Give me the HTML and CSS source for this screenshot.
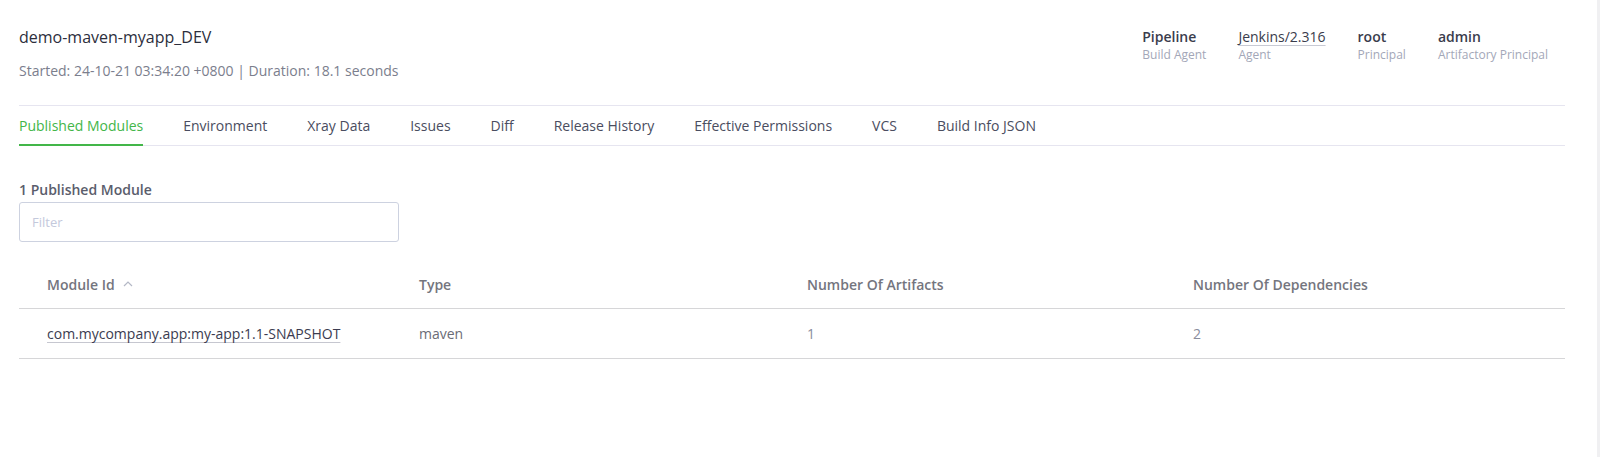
FILE: index.html
```html
<!DOCTYPE html>
<html lang="en">
<head>
<meta charset="utf-8">
<title>demo-maven-myapp_DEV</title>
<link rel="stylesheet" href="styles.css">
</head>
<body>
<div class="page">
  <main class="main">
    <header class="build-header">
      <div class="build-title">
        <h1 class="title">demo-maven-myapp_DEV</h1>
        <div class="subtitle">Started: 24-10-21 03:34:20 +0800 | Duration: 18.1 seconds</div>
      </div>
      <div class="meta">
        <div class="meta-item">
          <div class="meta-value">Pipeline</div>
          <div class="meta-label">Build Agent</div>
        </div>
        <div class="meta-item">
          <div class="meta-value link">Jenkins/2.316</div>
          <div class="meta-label">Agent</div>
        </div>
        <div class="meta-item">
          <div class="meta-value">root</div>
          <div class="meta-label">Principal</div>
        </div>
        <div class="meta-item">
          <div class="meta-value">admin</div>
          <div class="meta-label">Artifactory Principal</div>
        </div>
      </div>
    </header>

    <nav class="tabs">
      <div class="tab active">Published Modules</div>
      <div class="tab">Environment</div>
      <div class="tab">Xray Data</div>
      <div class="tab">Issues</div>
      <div class="tab">Diff</div>
      <div class="tab">Release History</div>
      <div class="tab">Effective Permissions</div>
      <div class="tab">VCS</div>
      <div class="tab">Build Info JSON</div>
    </nav>

    <section class="modules">
      <div class="count">1 Published Module</div>
      <input class="filter" type="text" placeholder="Filter">

      <div class="table">
        <div class="row head">
          <div class="cell">Module Id <svg class="caret" width="10" height="6" viewBox="0 0 10 6"><path d="M1 5 L5 1 L9 5" fill="none" stroke="#b4b8c6" stroke-width="1.2"/></svg></div>
          <div class="cell">Type</div>
          <div class="cell">Number Of Artifacts</div>
          <div class="cell">Number Of Dependencies</div>
        </div>
        <div class="row">
          <div class="cell"><span class="module-link">com.mycompany.app:my-app:1.1-SNAPSHOT</span></div>
          <div class="cell muted">maven</div>
          <div class="cell light">1</div>
          <div class="cell light">2</div>
        </div>
      </div>
    </section>
  </main>
  <div class="scroll-strip"></div>
</div>
</body>
</html>
```

FILE: styles.css
```css
* { box-sizing: border-box; }

html, body {
  margin: 0;
  padding: 0;
  background: #ffffff;
  font-family: "Open Sans", "Noto Sans", sans-serif;
  color: #3a3c4c;
}

.page {
  display: flex;
  min-height: 457px;
}

.main {
  flex: 1;
  padding: 0 32px 0 19px;
}

.scroll-strip {
  width: 3px;
  background: #f0f0f2;
}

.build-header {
  display: flex;
  justify-content: space-between;
  align-items: flex-start;
}

.title {
  margin: 26px 0 0;
  font-size: 16px;
  line-height: 22px;
  font-weight: 400;
  color: #2c2e3c;
}

.subtitle {
  margin-top: 13px;
  font-size: 14px;
  line-height: 19px;
  color: #7b7e8d;
}

.meta {
  display: flex;
  gap: 32px;
  margin-top: 27px;
  padding-right: 17px;
}

.meta-value {
  font-size: 14px;
  line-height: 20px;
  font-weight: 600;
  color: #3a3c4c;
}

.meta-value.link {
  font-weight: 400;
  color: #3a3c4c;
  text-decoration: underline;
  text-decoration-color: #c8cad4;
  text-underline-offset: 3px;
}

.meta-label {
  font-size: 12px;
  line-height: 16px;
  color: #a3a7b8;
}

.tabs {
  display: flex;
  gap: 40px;
  margin-top: 25px;
  border-top: 1px solid #e6e5f0;
  border-bottom: 1px solid #e6e5f0;
  height: 41px;
}

.tab {
  font-size: 14px;
  line-height: 20px;
  padding-top: 10px;
  height: 40px;
  color: #4a4d60;
  border-bottom: 2px solid transparent;
}

.tab.active {
  color: #43b649;
  border-bottom-color: #43b649;
}

.count {
  margin-top: 35px;
  font-size: 14px;
  line-height: 18px;
  font-weight: 600;
  color: #5a5d6c;
}

.filter {
  display: block;
  margin-top: 3px;
  width: 380px;
  height: 40px;
  border: 1px solid #cdd2e0;
  border-radius: 3px;
  padding: 0 12px;
  font-family: "Open Sans", "Noto Sans", sans-serif;
  font-size: 13px;
  color: #3a3c4c;
  outline: none;
}

.filter::placeholder {
  color: #c4c9dc;
}

.table {
  margin-top: 19px;
}

.row {
  display: grid;
  grid-template-columns: 372px 388px 386px 1fr;
  height: 50px;
  align-items: center;
  border-bottom: 1px solid #d6d6d8;
}

.row.head {
  height: 48px;
}

.cell {
  padding-left: 28px;
  font-size: 14px;
  line-height: 19px;
  color: #5f6170;
}

.head .cell {
  font-weight: 600;
  color: #74757e;
  display: flex;
  align-items: center;
  gap: 8px;
}

.caret {
  display: block;
  margin-top: -2px;
}

.module-link {
  color: #3b3c50;
  text-decoration: underline;
  text-decoration-color: #c6c7d0;
  text-underline-offset: 3px;
}

.muted { color: #6b6c76; }
.light { color: #8a8d9c; }
```
